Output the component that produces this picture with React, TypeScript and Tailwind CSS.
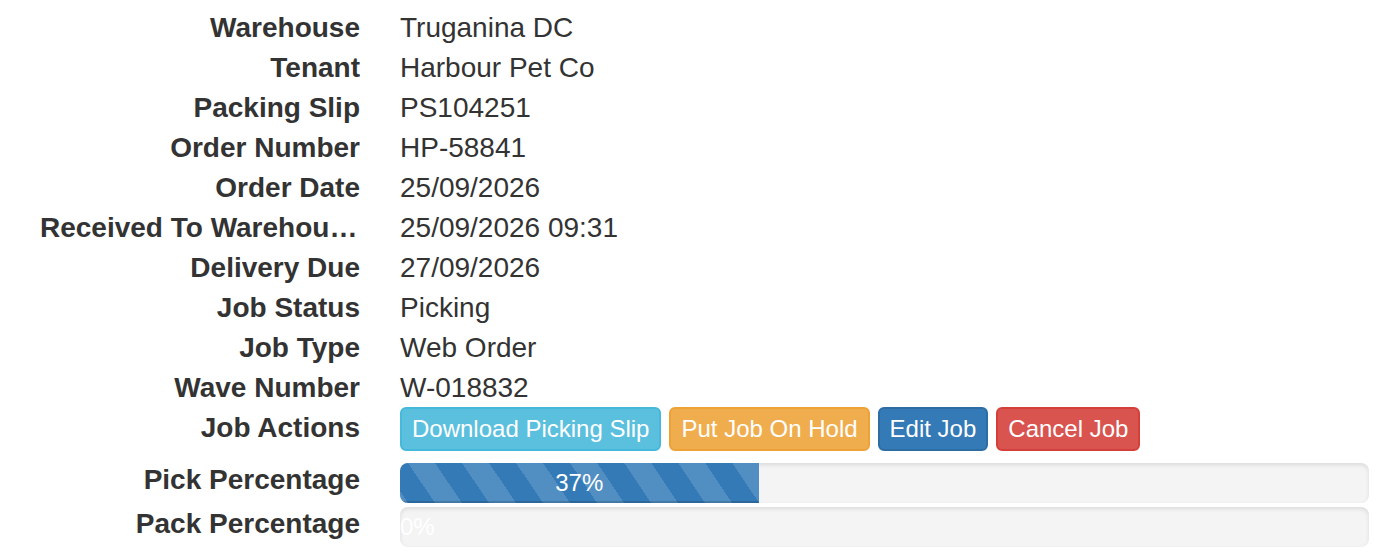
import React from "react";

const rows: [string, string][] = [
  ["Warehouse", "Truganina DC"],
  ["Tenant", "Harbour Pet Co"],
  ["Packing Slip", "PS104251"],
  ["Order Number", "HP-58841"],
  ["Order Date", "25/09/2026"],
  ["Received To Warehouse Date", "25/09/2026 09:31"],
  ["Delivery Due", "27/09/2026"],
  ["Job Status", "Picking"],
  ["Job Type", "Web Order"],
  ["Wave Number", "W-018832"],
];

const dt = "w-[320px] shrink-0 text-right font-bold overflow-hidden text-ellipsis whitespace-nowrap";
const btn = "text-[24px] leading-[36px] px-[10px] py-[2px] border-2 rounded-[6px] text-white whitespace-nowrap";

function Progress({ pct }: { pct: number }) {
  return (
    <div className="mt-[3px] h-[40px] w-[969px] rounded-[8px] bg-[#f4f4f4] shadow-[inset_0_2px_4px_rgba(0,0,0,0.1)] overflow-hidden">
      <div
        className="h-full bg-[#337ab7] text-white text-[24px] leading-[40px] text-center shadow-[inset_0_-2px_0_rgba(0,0,0,0.15)] bg-[image:repeating-linear-gradient(56deg,rgba(255,255,255,0.15)_0_6.6px,transparent_6.6px_29px,rgba(255,255,255,0.15)_29px_44.8px)]"
        style={{ width: `${pct}%` }}
      >
        {pct}%
      </div>
    </div>
  );
}

export default function App() {
  return (
    <div className="bg-white text-[#333] font-['Liberation_Sans',Arial,sans-serif] text-[28px] leading-[40px] pt-[8px] pl-[40px] w-[1378px] h-[555px] overflow-hidden">
      {rows.map(([k, v]) => (
        <div key={k} className="flex">
          <div className={dt}>{k}</div>
          <div className="ml-[40px]">{v}</div>
        </div>
      ))}
      <div className="flex h-[52px]">
        <div className={dt}>Job Actions</div>
        <div className="ml-[40px] -mt-[1px] flex gap-[8px] items-start">
          <button className={`${btn} bg-[#5bc0de] border-[#46b8da]`}>Download Picking Slip</button>
          <button className={`${btn} bg-[#f0ad4e] border-[#eea236]`}>Put Job On Hold</button>
          <button className={`${btn} bg-[#337ab7] border-[#2e6da4]`}>Edit Job</button>
          <button className={`${btn} bg-[#d9534f] border-[#d43f3a]`}>Cancel Job</button>
        </div>
      </div>
      <div className="flex h-[44px]">
        <div className={dt}>Pick Percentage</div>
        <div className="ml-[40px]">
          <Progress pct={37} />
        </div>
      </div>
      <div className="flex h-[44px]">
        <div className={dt}>Pack Percentage</div>
        <div className="ml-[40px]">
          <Progress pct={0} />
        </div>
      </div>
    </div>
  );
}
